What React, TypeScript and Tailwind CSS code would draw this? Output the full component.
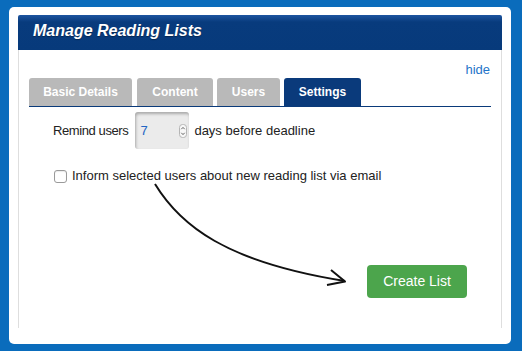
import React from "react";

const tabs = [
  { label: "Basic Details", w: "w-[103px]", ml: "ml-0" },
  { label: "Content", w: "w-[76px]", ml: "ml-[5px]" },
  { label: "Users", w: "w-[63px]", ml: "ml-[4px]" },
  { label: "Settings", w: "w-[77px]", ml: "ml-[4px]", active: true },
];

const Spinner = () => (
  <svg width="8" height="14" viewBox="0 0 8 14" className="shrink-0">
    <rect x="0.5" y="0.5" width="7" height="13" rx="3" fill="#f7f7f7" stroke="#b5b5b5" />
    <path d="M2.3 5.2 L4 3.4 L5.7 5.2" fill="none" stroke="#555" strokeWidth="0.9" />
    <path d="M2.3 8.8 L4 10.6 L5.7 8.8" fill="none" stroke="#555" strokeWidth="0.9" />
  </svg>
);

const Arrow = () => (
  <svg
    className="pointer-events-none absolute left-0 top-0"
    width="522"
    height="351"
    viewBox="0 0 522 351"
  >
    <path d="M155 184 C 180 225, 225 262, 345 281" fill="none" stroke="#111" strokeWidth="2" />
    <path d="M331 270 L345 281.5 L327 285" fill="none" stroke="#111" strokeWidth="2" strokeLinejoin="round" />
  </svg>
);

const App = () => {
  return (
    <div className="relative h-[351px] w-[522px] overflow-hidden bg-[#0a6cbc] pb-[7px] pl-[9px] pr-[11px] pt-[7px] font-['Liberation_Sans',Arial,sans-serif]">
      <div className="flex h-full flex-col rounded-[5px] bg-white px-[9px] pb-[16px] pt-[8px]">
        <div className="h-[35px] rounded-t-[2px] bg-gradient-to-b from-[#1d55a0] via-[#083b7d] via-[20%] to-[#073a7b] pl-[15px] pt-[8px]">
          <h1 className="text-[16px] font-bold italic leading-4 text-white [text-shadow:0_1px_1px_rgba(0,0,0,0.35)]">
            Manage Reading Lists
          </h1>
        </div>
        <div className="flex flex-1 flex-col border-x border-[#dedede] px-[10px]">
          <div className="h-[28px] pr-[1px] pt-[12px] text-right text-[13px] leading-4 text-[#1f74c9]">
            hide
          </div>
          <div className="flex h-[29px] items-stretch border-b border-[#0a3a7a]">
            {tabs.map((t) => (
              <div
                key={t.label}
                className={`${t.w} ${t.ml} flex items-center justify-center rounded-t-[3px] text-[12px] font-bold text-white ${
                  t.active ? "bg-[#0a3a7b]" : "bg-[#b9b9b9]"
                }`}
              >
                {t.label}
              </div>
            ))}
          </div>
          <div className="ml-[24px] mt-[5px] flex items-center text-[13px] text-[#222]">
            <span className="tracking-[-0.4px]">Remind users</span>
            <div className="ml-[7px] flex h-[37px] w-[54px] items-center rounded-[3px] bg-[#ebebeb] pl-[5px] pr-[2px] shadow-[inset_1px_2px_3px_rgba(0,0,0,0.28)]">
              <span className="flex-1 text-[13px] text-[#2266c4]">7</span>
              <Spinner />
            </div>
            <span className="ml-[5px]">days before deadline</span>
          </div>
          <div className="ml-[25px] mt-[19px] flex items-center text-[13px] leading-4 text-[#222]">
            <span className="h-[13px] w-[13px] rounded-[3px] border border-[#9a9a9a] bg-white shadow-[inset_0_1px_1px_rgba(0,0,0,0.08)]" />
            <span className="ml-[5px]">Inform selected users about new reading list via email</span>
          </div>
          <div className="ml-[338px] mt-[81px]">
            <button className="flex h-[33px] w-[100px] items-center justify-center rounded-[4px] bg-[#4ca54c] text-[14px] text-white">
              Create List
            </button>
          </div>
        </div>
      </div>
      <Arrow />
    </div>
  );
};

export default App;
